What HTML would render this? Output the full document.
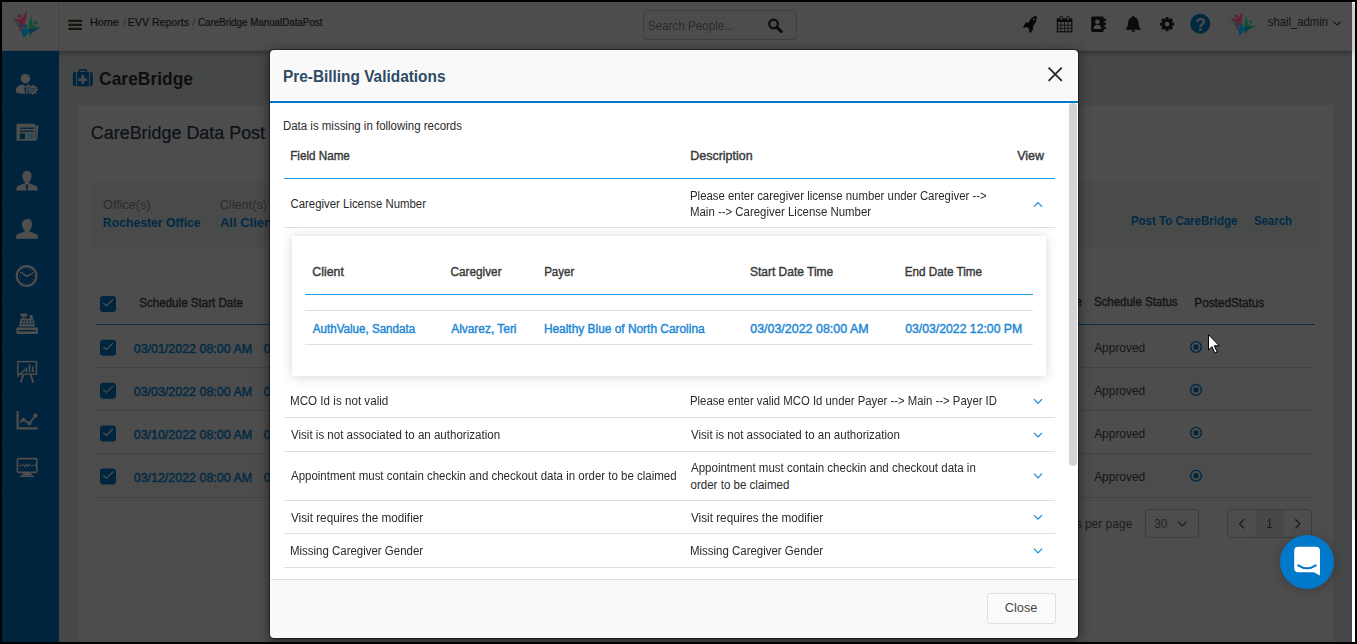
<!DOCTYPE html>
<html lang="en">
<head>
<meta charset="utf-8">
<title>CareBridge Manual Data Post - Pre-Billing Validations</title>
<style>
*{box-sizing:border-box}
html,body{margin:0;padding:0;background:#000;}
body{width:1357px;height:644px;overflow:hidden;position:relative;font-family:"Liberation Sans",sans-serif;}
#app{position:absolute;left:0;top:0;width:1357px;height:644px;background:#000;overflow:hidden}
.abs{position:absolute}
.t{position:absolute;white-space:nowrap;line-height:1;font-weight:400;transform-origin:0 0}
.t.sb{font-weight:400;-webkit-text-stroke:0.4px currentColor}
.t.sb2{-webkit-text-stroke:0.2px currentColor}
#page{position:absolute;left:2px;top:2px;width:1353px;height:640px;background:#464848;overflow:hidden}
#strip{position:absolute;left:1352px;top:2px;width:3px;height:640px;background:#fff}
#strip i{position:absolute;left:0;top:1px;width:3px;height:517px;background:linear-gradient(90deg,#ececec,#dcdcdc)}
#header{position:absolute;left:2px;top:2px;width:1350px;height:49px;background:#4c4d4c;border-bottom:1px solid #484746;box-shadow:0 2px 5px rgba(0,0,0,.32)}
#logo{position:absolute;left:2px;top:2px;width:57px;height:48px;background:#4e4e4e;border-right:1px solid #444544}
#sidebar{position:absolute;left:2px;top:51px;width:57px;height:591px;background:#00243d}
.sitem{position:absolute;left:0;width:57px;height:48px;border-bottom:1px solid #00293f}
.hsep{position:absolute;top:2px;width:1px;height:48px;background:#494949}
#card{position:absolute;left:78px;top:105px;width:1255px;height:537px;background:#4d4d4d}
#filter{position:absolute;left:92px;top:182px;width:1228px;height:65px;background:#494a4a}
.cb{position:absolute;width:16px;height:16px;border-radius:3px;background:#003a5e}
.rline{position:absolute;left:96px;width:1219px;height:1px;background:#424242}
#hline{position:absolute;left:96px;top:324px;width:1219px;height:1px;background:#00304e}
.stop{position:absolute;width:13px;height:13px}
.box{position:absolute;border:1px solid #3c3c3c;border-radius:3px}
#modal{position:absolute;left:269px;top:49px;width:810px;height:590px;background:#fff;border:1px solid rgba(0,0,0,.42);background-clip:padding-box;border-radius:5px;box-shadow:0 3px 12px rgba(0,0,0,.5);overflow:hidden}
#mhead{position:absolute;left:1px;top:1px;width:806px;height:49px;background:#f9f9f9;border-radius:3px 3px 0 0}
#mblue{position:absolute;left:0;top:51px;width:808px;height:2px;background:#0078c8}
#mfoot{position:absolute;left:1px;top:529px;width:806px;height:58px;background:#f9f9f9;border-top:1px solid #dcdcdc;border-radius:0 0 3px 3px}
.ml{position:absolute;height:1px;background:#dedede}
.bl{position:absolute;height:1px;background:#1e9be6}
#inner{position:absolute;left:292px;top:236px;width:754px;height:140px;background:#fff;box-shadow:0 1px 10px rgba(0,0,0,.17)}
#closebtn{position:absolute;left:987px;top:593px;width:69px;height:31px;border:1px solid #e0e0e0;border-radius:3px;background:#fbfbfb}
#thumb{position:absolute;left:1068.5px;top:103px;width:8.5px;height:363px;border-radius:4px;background:#d3d3d3}
svg{position:absolute;overflow:visible}
</style>
</head>
<body>
<div id="app">
<div id="page"></div>
<div id="strip"><i></i></div>

<!-- ===== top header ===== -->
<div id="header"></div>
<div id="logo"></div>

<div class="hsep" style="left:1047px"></div><div class="hsep" style="left:1081px"></div><div class="hsep" style="left:1115px"></div><div class="hsep" style="left:1149px"></div><div class="hsep" style="left:1183px"></div><div class="hsep" style="left:1216px"></div><svg class="abs" style="left:2px;top:2px" width="1350" height="48" viewBox="2 2 1350 48" ><g fill="#17140a"><rect x="68.4" y="19.8" width="13.6" height="2.2" rx=".6"/><rect x="68.4" y="23.8" width="13.6" height="2.2" rx=".6"/><rect x="68.4" y="27.8" width="13.6" height="2.2" rx=".6"/></g><rect x="643.5" y="10.5" width="153" height="29" rx="3" fill="#4c4c4c" stroke="#3e3e3e"/><circle cx="773.6" cy="24" r="4.3" fill="none" stroke="#0b0b0b" stroke-width="2.2"/><path d="M776.8 27.4 L781.4 31.6" stroke="#0b0b0b" stroke-width="2.8" stroke-linecap="round"/><path d="M1036.6 16.1 C1036.8 18 1036.6 19.4 1036.3 20.6 C1035.8 22.2 1035 23.4 1034.4 24.3 L1032.9 26.9 L1032.9 29.9 L1030.3 32.9 L1029.2 32.1 L1029.2 28.8 L1026.6 26.9 L1023.2 28 L1023.6 26.2 L1025.5 22.8 L1028.8 22.4 C1029.4 21.2 1029.8 20.4 1030.3 19.5 C1031 18.5 1031.8 17.8 1032.9 17.2 C1034 16.6 1035.2 16.2 1036.6 16.1 Z" fill="#060606"/><circle cx="1034" cy="19.6" r="1" fill="#474747"/><rect x="1057.4" y="19" width="14.4" height="12.8" fill="none" stroke="#0b0b0b" stroke-width="1.2"/><rect x="1057.4" y="19" width="14.4" height="3" fill="#0b0b0b"/><path d="M1060.9 22 V31.6" stroke="#0b0b0b" stroke-width=".8"/><path d="M1064.5 22 V31.6" stroke="#0b0b0b" stroke-width=".8"/><path d="M1068.1 22 V31.6" stroke="#0b0b0b" stroke-width=".8"/><path d="M1057.4 25.2 H1071.8" stroke="#0b0b0b" stroke-width=".8"/><path d="M1057.4 28.4 H1071.8" stroke="#0b0b0b" stroke-width=".8"/><rect x="1060" y="16.2" width="2.4" height="4.4" rx="1.1" fill="#4d4d4d" stroke="#0b0b0b" stroke-width=".9"/><rect x="1066.8" y="16.2" width="2.4" height="4.4" rx="1.1" fill="#4d4d4d" stroke="#0b0b0b" stroke-width=".9"/><rect x="1091.2" y="16.4" width="12.6" height="15.6" rx="1.4" fill="#0b0b0b"/><rect x="1103.6" y="18.6" width="2.2" height="2.6" rx=".6" fill="#0b0b0b"/><rect x="1103.6" y="22.6" width="2.2" height="2.6" rx=".6" fill="#0b0b0b"/><rect x="1103.6" y="26.6" width="2.2" height="2.6" rx=".6" fill="#0b0b0b"/><circle cx="1097.4" cy="21.8" r="2.3" fill="#4d4d4d"/><path d="M1093.6 29 c0 -3 1.6 -4.2 3.8 -4.2 c2.2 0 3.8 1.2 3.8 4.2z" fill="#4d4d4d"/><path d="M1133.3 16 c.8 0 1.3 .5 1.3 1.3 c2.6 .8 4 3 4 6 c0 3 .8 4.6 2.2 5.8 v.7 h-15 v-.7 c1.4 -1.2 2.2 -2.8 2.2 -5.8 c0 -3 1.4 -5.2 4 -6 c0 -.8 .5 -1.3 1.3 -1.3z" fill="#0b0b0b"/><path d="M1131.6 30.3 h3.4 c0 1 -.7 1.6 -1.7 1.6 c-1 0 -1.7 -.6 -1.7 -1.6z" fill="#0b0b0b"/><circle cx="1167.1" cy="24.1" r="4" fill="none" stroke="#0b0b0b" stroke-width="3.2"/><rect x="1165.6" y="17.1" width="3" height="3" fill="#0b0b0b" transform="rotate(0 1167.1 24.1)"/><rect x="1165.6" y="17.1" width="3" height="3" fill="#0b0b0b" transform="rotate(45 1167.1 24.1)"/><rect x="1165.6" y="17.1" width="3" height="3" fill="#0b0b0b" transform="rotate(90 1167.1 24.1)"/><rect x="1165.6" y="17.1" width="3" height="3" fill="#0b0b0b" transform="rotate(135 1167.1 24.1)"/><rect x="1165.6" y="17.1" width="3" height="3" fill="#0b0b0b" transform="rotate(180 1167.1 24.1)"/><rect x="1165.6" y="17.1" width="3" height="3" fill="#0b0b0b" transform="rotate(225 1167.1 24.1)"/><rect x="1165.6" y="17.1" width="3" height="3" fill="#0b0b0b" transform="rotate(270 1167.1 24.1)"/><rect x="1165.6" y="17.1" width="3" height="3" fill="#0b0b0b" transform="rotate(315 1167.1 24.1)"/><circle cx="1200.2" cy="23.7" r="10" fill="#00283f"/><circle cx="1242.7" cy="23.3" r="14" fill="#4d4d4d" stroke="#474848" stroke-width=".8"/><g opacity="1.0"><polygon points="1231.66,20.18 1234.51,22.15 1237.35,26.75 1238.89,27.19 1245.01,27.06 1245.23,29.60 1242.39,32.66 1239.32,35.51 1238.67,31.79 1237.35,28.28 1234.51,24.34" fill="#004862"/><polygon points="1229.69,18.00 1232.76,18.74 1236.04,18.87 1238.67,17.56 1240.64,14.71 1242.61,10.99 1242.39,16.90 1241.07,22.15 1238.89,26.09 1236.26,30.25 1236.48,25.66 1235.38,21.72 1232.32,19.97" fill="#5e2234"/><polygon points="1246.55,15.15 1247.20,19.97 1247.86,23.69 1249.83,25.22 1256.18,26.09 1252.46,27.63 1247.64,30.03 1246.55,32.66 1245.89,35.51 1245.01,31.79 1244.36,26.53 1244.80,21.28" fill="#124e36"/><polygon points="1244.80,27.19 1252.46,27.32 1248.52,29.60 1245.23,31.79" fill="#063a52"/><circle cx="1236.26" cy="16.02" r="1.76" fill="#5e2234"/><circle cx="1241.07" cy="25.00" r="1.85" fill="#004862"/><circle cx="1250.49" cy="21.94" r="1.67" fill="#124e36"/></g><path d="M1333.4 21.6 L1337 25 L1340.6 21.6" fill="none" stroke="#141414" stroke-width="1.1"/><g opacity="1.0"><polygon points="14.23,20.69 17.46,22.93 20.70,28.15 22.44,28.65 29.40,28.50 29.65,31.38 26.42,34.87 22.94,38.10 22.19,33.87 20.70,29.89 17.46,25.41" fill="#004862"/><polygon points="11.99,18.20 15.47,19.04 19.20,19.19 22.19,17.70 24.43,14.47 26.67,10.24 26.42,16.96 24.93,22.93 22.44,27.40 19.45,32.13 19.70,26.91 18.46,22.43 14.98,20.44" fill="#5e2234"/><polygon points="31.14,14.97 31.89,20.44 32.64,24.67 34.88,26.41 42.09,27.40 37.86,29.14 32.39,31.88 31.14,34.87 30.40,38.10 29.40,33.87 28.66,27.90 29.15,21.93" fill="#124e36"/><polygon points="29.15,28.65 37.86,28.80 33.38,31.38 29.65,33.87" fill="#063a52"/><circle cx="19.45" cy="15.96" r="2.00" fill="#5e2234"/><circle cx="24.93" cy="26.16" r="2.10" fill="#004862"/><circle cx="35.62" cy="22.68" r="1.90" fill="#124e36"/></g></svg>

<!-- ===== sidebar ===== -->
<div id="sidebar">
<div class="sitem" style="top:10px"></div><div class="sitem" style="top:58px"></div><div class="sitem" style="top:106px"></div><div class="sitem" style="top:154px"></div><div class="sitem" style="top:202px"></div><div class="sitem" style="top:250px"></div><div class="sitem" style="top:298px"></div><div class="sitem" style="top:346px"></div><div class="sitem" style="top:394px"></div>
</div>
<svg class="abs" style="left:2px;top:50px" width="58" height="592" viewBox="2 50 58 592" ><circle cx="25.4" cy="78.7" r="4.75" fill="#4e4e4e"/><path d="M15.8 90.4 C15.8 86.6 19.4 84.7 22.8 84.4 L25.4 86.6 L28 84.4 C30 84.6 31.6 85.2 32.6 86 L30 93.3 C26 93.9 20.4 93.8 16.8 92.7 C16.1 92.3 15.8 91.5 15.8 90.4Z" fill="#4e4e4e"/><path d="M25.4 86.9 l.9 1.1 l-.4 4.6 l-.5 .9 l-.5 -.9 l-.4 -4.6z" fill="#00243d"/><circle cx="32.9" cy="89.8" r="5.5" fill="#00243d"/><circle cx="32.9" cy="89.8" r="3.7" fill="#4e4e4e"/><rect x="31.85" y="85.00" width="2.1" height="2.2" rx=".4" fill="#4e4e4e" transform="rotate(0 32.9 89.8)"/><rect x="31.85" y="85.00" width="2.1" height="2.2" rx=".4" fill="#4e4e4e" transform="rotate(45 32.9 89.8)"/><rect x="31.85" y="85.00" width="2.1" height="2.2" rx=".4" fill="#4e4e4e" transform="rotate(90 32.9 89.8)"/><rect x="31.85" y="85.00" width="2.1" height="2.2" rx=".4" fill="#4e4e4e" transform="rotate(135 32.9 89.8)"/><rect x="31.85" y="85.00" width="2.1" height="2.2" rx=".4" fill="#4e4e4e" transform="rotate(180 32.9 89.8)"/><rect x="31.85" y="85.00" width="2.1" height="2.2" rx=".4" fill="#4e4e4e" transform="rotate(225 32.9 89.8)"/><rect x="31.85" y="85.00" width="2.1" height="2.2" rx=".4" fill="#4e4e4e" transform="rotate(270 32.9 89.8)"/><rect x="31.85" y="85.00" width="2.1" height="2.2" rx=".4" fill="#4e4e4e" transform="rotate(315 32.9 89.8)"/><circle cx="32.9" cy="89.8" r="2.1" fill="#16384c"/><circle cx="32.9" cy="89.8" r="1.1" fill="#4e4e4e"/><path d="M16.5 123.7 h18.4 v1.9 h3.6 l-1.3 13.2 q-.2 2 -2.2 2 h-18.5z" fill="#4e4e4e"/><rect x="19.8" y="127.6" width="13.7" height="1.2" fill="#00243d"/><rect x="19.8" y="130.6" width="13.7" height="1.2" fill="#00243d"/><rect x="19.8" y="133.4" width="5.2" height="5.6" fill="#00243d"/><rect x="27.3" y="133.4" width="5.9" height="5.6" fill="#2b4a5b"/><rect x="34.9" y="126.4" width=".8" height="12" fill="#00243d" opacity=".55"/><path transform="translate(0 .9)" d="M27 170.2 c3 0 4.6 2 4.6 4.8 c0 2.6 -1.2 5 -2.6 6 l0 1.4 l6.6 2.4 c1.4 .6 2 1.6 2 3.2 v1.6 h-21.2 v-1.6 c0 -1.6 .6 -2.6 2 -3.2 l6.6 -2.4 l0 -1.4 c-1.4 -1 -2.6 -3.4 -2.6 -6 c0 -2.8 1.6 -4.8 4.6 -4.8z" fill="#4e4e4e"/><path transform="translate(0 .9)" d="M27 183 l1.2 1.4 l-.7 5 l-.5 1.6 l-.5 -1.6 l-.7 -5z" fill="#00243d"/><path transform="translate(0 1.2)" d="M27 217.6 c3.2 0 5 2.2 5 5.4 c0 2.8 -1.2 5.2 -2.8 6.2 l0 1.2 l6.8 2.4 c1.4 .6 2 1.6 2 3.2 v1.6 h-22 v-1.6 c0 -1.6 .6 -2.6 2 -3.2 l6.8 -2.4 l0 -1.2 c-1.6 -1 -2.8 -3.4 -2.8 -6.2 c0 -2.8 1.8 -5 5 -5z" fill="#4e4e4e"/><circle cx="26.6" cy="276" r="9.8" fill="none" stroke="#4e4e4e" stroke-width="2.2"/><path d="M21.4 272.4 L26.6 276.4 L32.4 273.4" fill="none" stroke="#4e4e4e" stroke-width="1.6" stroke-linecap="round" stroke-linejoin="round"/><circle cx="26.60" cy="268.80" r=".55" fill="#4e4e4e"/><circle cx="30.20" cy="269.76" r=".55" fill="#4e4e4e"/><circle cx="32.84" cy="272.40" r=".55" fill="#4e4e4e"/><circle cx="33.80" cy="276.00" r=".55" fill="#4e4e4e"/><circle cx="32.84" cy="279.60" r=".55" fill="#4e4e4e"/><circle cx="30.20" cy="282.24" r=".55" fill="#4e4e4e"/><circle cx="26.60" cy="283.20" r=".55" fill="#4e4e4e"/><circle cx="23.00" cy="282.24" r=".55" fill="#4e4e4e"/><circle cx="20.36" cy="279.60" r=".55" fill="#4e4e4e"/><circle cx="19.40" cy="276.00" r=".55" fill="#4e4e4e"/><circle cx="20.36" cy="272.40" r=".55" fill="#4e4e4e"/><circle cx="23.00" cy="269.76" r=".55" fill="#4e4e4e"/><rect x="20.4" y="313.4" width="7" height="3" rx="1" fill="#4e4e4e"/><rect x="23" y="316" width="1.6" height="3" fill="#4e4e4e"/><rect x="29.6" y="315" width="3" height="4" fill="#4e4e4e"/><path d="M20.6 318.6 h12.8 l1.8 8 h-16.4z" fill="#4e4e4e"/><rect x="16.4" y="327.4" width="21.4" height="6.6" rx="1" fill="#4e4e4e"/><rect x="18.4" y="330" width="17.4" height="1.4" fill="#00243d"/><g fill="#00243d"><rect x="22" y="320.4" width="2" height="1.2"/><rect x="25" y="320.4" width="2" height="1.2"/><rect x="28" y="320.4" width="2" height="1.2"/><rect x="31" y="320.4" width="2" height="1.2"/><rect x="21.4" y="323" width="2" height="1.2"/><rect x="24.6" y="323" width="2" height="1.2"/><rect x="27.8" y="323" width="2" height="1.2"/><rect x="31" y="323" width="2.4" height="1.2"/></g><rect x="17.8" y="361.6" width="18.6" height="12.6" fill="none" stroke="#4e4e4e" stroke-width="1.5"/><rect x="25.4" y="367.6" width="1.8" height="4.6" fill="#4e4e4e"/><rect x="28.6" y="364.6" width="1.8" height="7.6" fill="#4e4e4e"/><rect x="31.8" y="366.4" width="1.8" height="5.8" fill="#4e4e4e"/><path d="M17.4 376.8 L25 369.4" stroke="#4e4e4e" stroke-width="1.3" fill="none"/><path d="M23.4 374.6 L20.6 382.6 M30.6 374.6 L33.4 382.6" stroke="#4e4e4e" stroke-width="1.8" fill="none"/><path d="M17.6 411 V428.4 H37.6" fill="none" stroke="#4e4e4e" stroke-width="2.2"/><path d="M20 422.2 L23.4 419.6 L29.4 423.6 L35.4 415.4" fill="none" stroke="#4e4e4e" stroke-width="1.8"/><circle cx="23.4" cy="419.8" r="2" fill="#4e4e4e"/><circle cx="29.4" cy="423.4" r="2" fill="#4e4e4e"/><circle cx="35.4" cy="415.6" r="2.2" fill="#4e4e4e"/><rect x="17.4" y="458.6" width="19.4" height="13.8" rx="1.2" fill="none" stroke="#4e4e4e" stroke-width="1.6"/><path d="M19 465.6 h3.4 l1 -1.8 l1.4 3.4 l1.4 -3.6 l1.4 3.6 l1.4 -3.4 l1.2 1.8 h4" fill="none" stroke="#4e4e4e" stroke-width="1"/><rect x="35" y="463.4" width="1.4" height="3" fill="#4e4e4e"/><path d="M23.4 473 h7.4 l1.6 2.6 h-10.6z" fill="#4e4e4e"/><rect x="20" y="475.4" width="14.2" height="1.5" rx=".7" fill="#4e4e4e"/></svg>

<!-- ===== page content ===== -->
<div id="card"></div>
<div id="filter"></div>
<div id="hline"></div>
<svg class="abs" style="left:0px;top:0px" width="1357" height="644" viewBox="0 0 1357 644" ><rect x="96" y="368" width="1219" height="42" fill="#4c4c4c"/><rect x="96" y="455" width="1219" height="42" fill="#4c4c4c"/><path d="M78.4 72.4 V70.6 Q78.4 69 80 69 H85.7 Q87.3 69 87.3 70.6 V72.4 H85.8 V70.7 H79.9 V72.4Z" fill="#00263f"/><path d="M76.1 72 H74.8 Q72.8 72 72.8 74 V84.3 Q72.8 86.3 74.8 86.3 H76.1Z" fill="#00263f"/><path d="M90.1 72 H90.9 Q92.9 72 92.9 74 V84.3 Q92.9 86.3 90.9 86.3 H90.1Z" fill="#00263f"/><rect x="77" y="72" width="12.2" height="14.3" fill="#00263f"/><path d="M81.2 74.9 h3.1 v3.4 h2.8 v2.6 h-2.8 v2.8 h-3.1 v-2.8 h-3 v-2.6 h3z" fill="#474747"/><rect x="100" y="296" width="16" height="16" rx="3.2" fill="#00263f"/><path d="M103.3 303.1 L106.6 305.7 L113 299.2" fill="none" stroke="#4d4d4d" stroke-width="1.3"/><rect x="100" y="339.8" width="16" height="16" rx="3.2" fill="#00263f"/><path d="M103.3 346.90000000000003 L106.6 349.5 L113 343.0" fill="none" stroke="#4d4d4d" stroke-width="1.3"/><circle cx="1196" cy="347.0" r="5.4" fill="none" stroke="#00263f" stroke-width="1.35"/><rect x="1193.6" y="344.6" width="4.8" height="4.8" rx=".7" fill="#00263f"/><rect x="100" y="382.7" width="16" height="16" rx="3.2" fill="#00263f"/><path d="M103.3 389.8 L106.6 392.4 L113 385.9" fill="none" stroke="#4d4d4d" stroke-width="1.3"/><circle cx="1196" cy="389.9" r="5.4" fill="none" stroke="#00263f" stroke-width="1.35"/><rect x="1193.6" y="387.5" width="4.8" height="4.8" rx=".7" fill="#00263f"/><rect x="100" y="425.6" width="16" height="16" rx="3.2" fill="#00263f"/><path d="M103.3 432.70000000000005 L106.6 435.3 L113 428.8" fill="none" stroke="#4d4d4d" stroke-width="1.3"/><circle cx="1196" cy="432.8" r="5.4" fill="none" stroke="#00263f" stroke-width="1.35"/><rect x="1193.6" y="430.40000000000003" width="4.8" height="4.8" rx=".7" fill="#00263f"/><rect x="100" y="468.5" width="16" height="16" rx="3.2" fill="#00263f"/><path d="M103.3 475.6 L106.6 478.2 L113 471.7" fill="none" stroke="#4d4d4d" stroke-width="1.3"/><circle cx="1196" cy="475.7" r="5.4" fill="none" stroke="#00263f" stroke-width="1.35"/><rect x="1193.6" y="473.3" width="4.8" height="4.8" rx=".7" fill="#00263f"/><rect x="96" y="367.0" width="1219" height="1" fill="#434343"/><rect x="96" y="410.0" width="1219" height="1" fill="#434343"/><rect x="96" y="453.3" width="1219" height="1" fill="#434343"/><rect x="96" y="497.0" width="1219" height="1" fill="#434343"/><rect x="1145.5" y="509.5" width="53" height="28" rx="3" fill="none" stroke="#3d3d3d"/><path d="M1178 521.6 L1182.3 526 L1186.6 521.6" fill="none" stroke="#1a1a1a" stroke-width="1.2"/><rect x="1255.5" y="510" width="28" height="27" fill="#474747"/><rect x="1227.5" y="509.5" width="84" height="28" rx="3" fill="none" stroke="#3d3d3d"/><path d="M1244 519.2 L1239.6 523.8 L1244 528.4" fill="none" stroke="#1a1a1a" stroke-width="1.3"/><path d="M1295.4 519.2 L1299.8 523.8 L1295.4 528.4" fill="none" stroke="#1a1a1a" stroke-width="1.3"/></svg>
<span class="t sb2" id="b0" style="left:89px;top:17px;font-size:11.5px;color:#101010;transform:translate(0.90px,0) scaleX(0.9420);">Home</span>
<span class="t" id="b1" style="left:122px;top:17px;font-size:11.5px;color:#333;transform:translate(0.50px,0) scaleX(1.0769);">/</span>
<span class="t sb2" id="b2" style="left:127px;top:17px;font-size:11.5px;color:#101010;transform:translate(0.85px,0) scaleX(0.9191);">EVV Reports</span>
<span class="t" id="b3" style="left:192px;top:17px;font-size:11.5px;color:#333;transform:translate(0.00px,0) scaleX(1.0769);">/</span>
<span class="t sb2" id="b4" style="left:197px;top:17px;font-size:10.5px;color:#101010;transform:translate(0.95px,0) scaleX(0.9313);">CareBridge ManualDataPost</span>
<span class="t" id="b5" style="left:648px;top:19px;font-size:13.5px;color:#2b2b2b;transform:translate(0.00px,0) scaleX(0.8619);">Search People...</span>
<span class="t" id="b6" style="left:1195px;top:16px;font-size:18px;color:#4b4b4b;font-weight:700;transform:translate(0.35px,0) scaleX(0.9626);">?</span>
<span class="t" id="b7" style="left:1267px;top:16px;font-size:12px;color:#141414;transform:translate(0.75px,0) scaleX(0.9421);">shail_admin</span>
<span class="t" id="b8" style="left:99px;top:69px;font-size:19px;color:#0e0e10;font-weight:700;transform:translate(0.10px,0) scaleX(0.9164);">CareBridge</span>
<span class="t sb2" id="b9" style="left:90px;top:124px;font-size:18px;color:#0c1118;transform:translate(0.85px,0) scaleX(0.9948);">CareBridge Data Post</span>
<span class="t" id="b10" style="left:103px;top:198px;font-size:13.5px;color:#2c2c2c;transform:translate(0.10px,0) scaleX(0.9330);">Office(s)</span>
<span class="t" id="b11" style="left:102px;top:216px;font-size:13px;color:#002a45;font-weight:700;transform:translate(0.85px,0) scaleX(0.9397);">Rochester Office</span>
<span class="t" id="b12" style="left:219px;top:198px;font-size:13.5px;color:#2c2c2c;transform:translate(0.65px,0) scaleX(0.9415);">Client(s)</span>
<span class="t" id="b13" style="left:219px;top:216px;font-size:13px;color:#002a45;font-weight:700;transform:translate(0.90px,0) scaleX(1.0024);">All Clients</span>
<span class="t" id="b14" style="left:1130px;top:215px;font-size:12px;color:#002a45;font-weight:700;transform:translate(0.90px,0) scaleX(0.9578);">Post To CareBridge</span>
<span class="t" id="b15" style="left:1253px;top:215px;font-size:12px;color:#002a45;font-weight:700;transform:translate(0.95px,0) scaleX(0.9487);">Search</span>
<span class="t sb" id="b16" style="left:139px;top:297px;font-size:12px;color:#151515;transform:translate(0.25px,0) scaleX(0.9658);">Schedule Start Date</span>
<span class="t sb" id="b17" style="left:1093px;top:296px;font-size:12px;color:#151515;transform:translate(0.90px,0) scaleX(0.9573);">Schedule Status</span>
<span class="t sb" id="b18" style="left:1194px;top:297px;font-size:12px;color:#151515;transform:translate(0.35px,0) scaleX(0.9787);">PostedStatus</span>
<span class="t sb" id="b19" style="left:1045px;top:296px;font-size:12px;color:#151515;transform:translate(0.75px,0) scaleX(0.8987);">Service</span>
<span class="t sb" id="b20" style="left:133px;top:343px;font-size:12px;color:#002a45;transform:translate(0.70px,0) scaleX(1.0380);">03/01/2022 08:00 AM</span>
<span class="t sb" id="b21" style="left:263px;top:343px;font-size:12px;color:#002a45;transform:translate(0.75px,0) scaleX(1.0312);">03/01/2022 12:00 PM</span>
<span class="t" id="b22" style="left:1094px;top:342px;font-size:12px;color:#151515;transform:translate(0.15px,0) scaleX(0.9941);">Approved</span>
<span class="t sb" id="b23" style="left:133px;top:386px;font-size:12px;color:#002a45;transform:translate(0.70px,0) scaleX(1.0380);">03/03/2022 08:00 AM</span>
<span class="t sb" id="b24" style="left:263px;top:386px;font-size:12px;color:#002a45;transform:translate(0.75px,0) scaleX(1.0312);">03/03/2022 12:00 PM</span>
<span class="t" id="b25" style="left:1094px;top:385px;font-size:12px;color:#151515;transform:translate(0.15px,0) scaleX(0.9941);">Approved</span>
<span class="t sb" id="b26" style="left:133px;top:429px;font-size:12px;color:#002a45;transform:translate(0.70px,0) scaleX(1.0380);">03/10/2022 08:00 AM</span>
<span class="t sb" id="b27" style="left:263px;top:429px;font-size:12px;color:#002a45;transform:translate(0.75px,0) scaleX(1.0312);">03/10/2022 12:00 PM</span>
<span class="t" id="b28" style="left:1094px;top:428px;font-size:12px;color:#151515;transform:translate(0.15px,0) scaleX(0.9941);">Approved</span>
<span class="t sb" id="b29" style="left:133px;top:472px;font-size:12px;color:#002a45;transform:translate(0.70px,0) scaleX(1.0380);">03/12/2022 08:00 AM</span>
<span class="t sb" id="b30" style="left:263px;top:472px;font-size:12px;color:#002a45;transform:translate(0.75px,0) scaleX(1.0312);">03/12/2022 12:00 PM</span>
<span class="t" id="b31" style="left:1094px;top:471px;font-size:12px;color:#151515;transform:translate(0.15px,0) scaleX(0.9941);">Approved</span>
<span class="t" id="b32" style="left:1050px;top:517px;font-size:13.5px;color:#1c1c1c;transform:translate(0.25px,0) scaleX(0.9648);">Items</span>
<span class="t" id="b33" style="left:1084px;top:517px;font-size:13.5px;color:#1c1c1c;transform:translate(0.90px,0) scaleX(0.8909);">per page</span>
<span class="t" id="b34" style="left:1154px;top:517px;font-size:13px;color:#222;transform:translate(0.05px,0) scaleX(0.9321);">30</span>
<span class="t" id="b35" style="left:1266px;top:518px;font-size:12px;color:#1c1c1c;transform:translate(0.00px,0) scaleX(1.0522);">1</span>

<!-- ===== modal ===== -->
<div id="modal">
  <div id="mhead"></div>
  <div id="mblue"></div>
  <div id="mfoot"></div>
</div>
<div id="thumb"></div>
<svg class="abs" style="left:0px;top:0px" width="1357" height="644" viewBox="0 0 1357 644" ><path d="M1048.6 67.6 L1061.8 80.8 M1061.8 67.6 L1048.6 80.8" stroke="#262626" stroke-width="1.8" fill="none"/><rect x="284" y="178" width="771" height="1" fill="#1e9be6"/><rect x="284" y="227" width="771" height="1" fill="#dfdfdf"/><rect x="284" y="417" width="771" height="1" fill="#dfdfdf"/><rect x="284" y="451" width="771" height="1" fill="#dfdfdf"/><rect x="284" y="500" width="771" height="1" fill="#dfdfdf"/><rect x="284" y="533" width="771" height="1" fill="#dfdfdf"/><rect x="284" y="567" width="771" height="1" fill="#dfdfdf"/><path d="M1034 206.7 L1038 202.6 L1042 206.7" fill="none" stroke="#1b87d4" stroke-width="1.2"/><path d="M1034 399.2 L1038 403.3 L1042 399.2" fill="none" stroke="#1b87d4" stroke-width="1.2"/><path d="M1034 432.9 L1038 437 L1042 432.9" fill="none" stroke="#1b87d4" stroke-width="1.2"/><path d="M1034 473.7 L1038 477.8 L1042 473.7" fill="none" stroke="#1b87d4" stroke-width="1.2"/><path d="M1034 515.1 L1038 519.2 L1042 515.1" fill="none" stroke="#1b87d4" stroke-width="1.2"/><path d="M1034 548.6999999999999 L1038 552.8 L1042 548.6999999999999" fill="none" stroke="#1b87d4" stroke-width="1.2"/></svg>
<div id="inner"></div>
<svg class="abs" style="left:0px;top:0px" width="1357" height="644" viewBox="0 0 1357 644" ><rect x="305" y="294" width="728" height="1" fill="#1e9be6"/><rect x="305" y="310" width="728" height="1" fill="#dfdfdf"/><rect x="305" y="344" width="728" height="1" fill="#dfdfdf"/></svg>
<div id="closebtn"></div>
<span class="t" id="m0" style="left:282px;top:69px;font-size:16px;color:#2e4a66;font-weight:700;transform:translate(0.95px,0) scaleX(0.9620);">Pre-Billing Validations</span>
<span class="t" id="m1" style="left:282px;top:120px;font-size:12px;color:#2b2b2b;transform:translate(0.95px,0) scaleX(0.9552);">Data is missing in following records</span>
<span class="t sb" id="m2" style="left:290px;top:150px;font-size:12px;color:#3a3a3a;transform:translate(0.25px,0) scaleX(0.9710);">Field Name</span>
<span class="t sb" id="m3" style="left:690px;top:150px;font-size:12px;color:#3a3a3a;transform:translate(0.25px,0) scaleX(1.0383);">Description</span>
<span class="t sb" id="m4" style="left:1017px;top:150px;font-size:12px;color:#3a3a3a;transform:translate(0.25px,0) scaleX(1.0343);">View</span>
<span class="t" id="m5" style="left:290px;top:198px;font-size:12px;color:#2b2b2b;transform:translate(0.50px,0) scaleX(0.9493);">Caregiver License Number</span>
<span class="t" id="m6" style="left:690px;top:190px;font-size:12px;color:#2b2b2b;transform:translate(0.00px,0) scaleX(0.9494);">Please enter caregiver license number under Caregiver --&gt;</span>
<span class="t" id="m7" style="left:690px;top:206px;font-size:12px;color:#2b2b2b;transform:translate(0.00px,0) scaleX(0.9511);">Main --&gt; Caregiver License Number</span>
<span class="t sb" id="m8" style="left:312px;top:266px;font-size:12px;color:#3a3a3a;transform:translate(0.35px,0) scaleX(1.0278);">Client</span>
<span class="t sb" id="m9" style="left:450px;top:266px;font-size:12px;color:#3a3a3a;transform:translate(0.45px,0) scaleX(0.9826);">Caregiver</span>
<span class="t sb" id="m10" style="left:544px;top:266px;font-size:12px;color:#3a3a3a;transform:translate(0.15px,0) scaleX(0.9610);">Payer</span>
<span class="t sb" id="m11" style="left:749px;top:266px;font-size:12px;color:#3a3a3a;transform:translate(0.95px,0) scaleX(0.9994);">Start Date Time</span>
<span class="t sb" id="m12" style="left:904px;top:266px;font-size:12px;color:#3a3a3a;transform:translate(0.70px,0) scaleX(0.9732);">End Date Time</span>
<span class="t sb" id="m13" style="left:312px;top:323px;font-size:12px;color:#1b87d4;transform:translate(0.85px,0) scaleX(0.9656);">AuthValue, Sandata</span>
<span class="t sb" id="m14" style="left:451px;top:323px;font-size:12px;color:#1b87d4;transform:translate(0.20px,0) scaleX(0.9924);">Alvarez, Teri</span>
<span class="t sb" id="m15" style="left:543px;top:323px;font-size:12px;color:#1b87d4;transform:translate(0.90px,0) scaleX(0.9917);">Healthy Blue of North Carolina</span>
<span class="t sb" id="m16" style="left:750px;top:323px;font-size:12px;color:#1b87d4;transform:translate(0.20px,0) scaleX(1.0380);">03/03/2022 08:00 AM</span>
<span class="t sb" id="m17" style="left:905px;top:323px;font-size:12px;color:#1b87d4;transform:translate(0.20px,0) scaleX(1.0198);">03/03/2022 12:00 PM</span>
<span class="t" id="m18" style="left:290px;top:395px;font-size:12px;color:#2b2b2b;transform:translate(0.00px,0) scaleX(0.9694);">MCO Id is not valid</span>
<span class="t" id="m19" style="left:690px;top:395px;font-size:12px;color:#2b2b2b;transform:translate(0.00px,0) scaleX(0.9451);">Please enter valid MCO Id under Payer --&gt; Main --&gt; Payer ID</span>
<span class="t" id="m20" style="left:291px;top:429px;font-size:12px;color:#2b2b2b;transform:translate(0.00px,0) scaleX(0.9623);">Visit is not associated to an authorization</span>
<span class="t" id="m21" style="left:691px;top:429px;font-size:12px;color:#2b2b2b;transform:translate(0.00px,0) scaleX(0.9615);">Visit is not associated to an authorization</span>
<span class="t" id="m22" style="left:291px;top:470px;font-size:12px;color:#2b2b2b;transform:translate(0.00px,0) scaleX(0.9571);">Appointment must contain checkin and checkout data in order to be claimed</span>
<span class="t" id="m23" style="left:691px;top:462px;font-size:12px;color:#2b2b2b;transform:translate(0.00px,0) scaleX(0.9595);">Appointment must contain checkin and checkout data in</span>
<span class="t" id="m24" style="left:690px;top:479px;font-size:12px;color:#2b2b2b;transform:translate(0.50px,0) scaleX(0.9626);">order to be claimed</span>
<span class="t" id="m25" style="left:291px;top:512px;font-size:12px;color:#2b2b2b;transform:translate(0.00px,0) scaleX(0.9778);">Visit requires the modifier</span>
<span class="t" id="m26" style="left:691px;top:512px;font-size:12px;color:#2b2b2b;transform:translate(0.00px,0) scaleX(0.9778);">Visit requires the modifier</span>
<span class="t" id="m27" style="left:290px;top:545px;font-size:12px;color:#2b2b2b;transform:translate(0.00px,0) scaleX(0.9548);">Missing Caregiver Gender</span>
<span class="t" id="m28" style="left:690px;top:545px;font-size:12px;color:#2b2b2b;transform:translate(0.00px,0) scaleX(0.9548);">Missing Caregiver Gender</span>
<span class="t" id="m29" style="left:1004px;top:601px;font-size:13.5px;color:#484848;transform:translate(0.75px,0) scaleX(0.9444);">Close</span>

<svg class="abs" style="left:0px;top:0px" width="1357" height="644" viewBox="0 0 1357 644" ><circle cx="1307" cy="563" r="28" fill="#000" opacity=".18" style="filter:blur(5px)"/><circle cx="1307" cy="562" r="27" fill="#0079cb"/><path d="M1298.4 546.8 h17.4 q4.2 0 4.2 4.2 v24.6 l-6.2 -3.4 h-15.4 q-4.2 0 -4.2 -4.2 v-17 q0 -4.2 4.2 -4.2z" fill="#fff"/><path d="M1298.2 565.4 q8.8 5.8 17.6 0" fill="none" stroke="#0079cb" stroke-width="2" stroke-linecap="round"/><path d="M1208.5 334.6 v15.4 l3.5 -3.3 l2.9 6.4 l2.3 -1 l-2.9 -6.3 h4.9z" fill="#fff" stroke="#000" stroke-width="1" stroke-linejoin="round"/></svg>
</div>
</body>
</html>
